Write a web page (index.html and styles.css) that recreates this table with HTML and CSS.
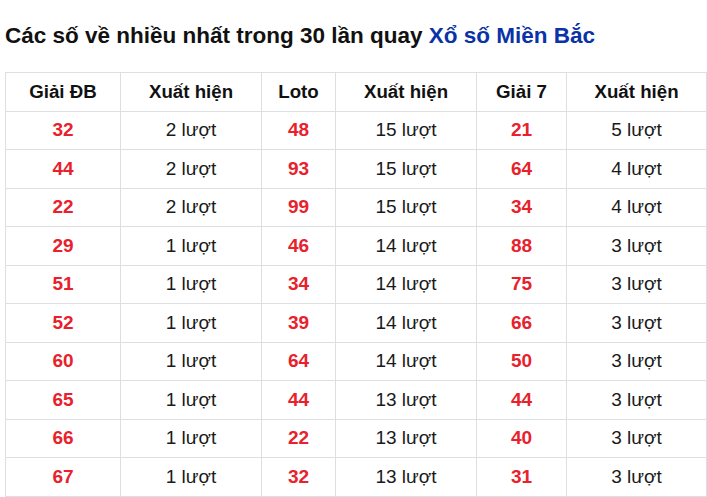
FILE: index.html
```html
<!DOCTYPE html>
<html lang="vi">
<head>
<meta charset="utf-8">
<link rel="stylesheet" href="styles.css">
</head>
<body>
<div class="wrap">
  <h2 class="title">Các số về nhiều nhất trong 30 lần quay <span class="hl">Xổ số Miền Bắc</span></h2>
  <table class="stats">
    <colgroup>
      <col class="c1"><col class="c2"><col class="c3"><col class="c4"><col class="c5"><col class="c6">
    </colgroup>
    <thead>
      <tr><th>Giải ĐB</th><th>Xuất hiện</th><th>Loto</th><th>Xuất hiện</th><th>Giải 7</th><th>Xuất hiện</th></tr>
    </thead>
    <tbody>
      <tr><td class="num">32</td><td>2 lượt</td><td class="num">48</td><td>15 lượt</td><td class="num">21</td><td>5 lượt</td></tr>
      <tr><td class="num">44</td><td>2 lượt</td><td class="num">93</td><td>15 lượt</td><td class="num">64</td><td>4 lượt</td></tr>
      <tr><td class="num">22</td><td>2 lượt</td><td class="num">99</td><td>15 lượt</td><td class="num">34</td><td>4 lượt</td></tr>
      <tr><td class="num">29</td><td>1 lượt</td><td class="num">46</td><td>14 lượt</td><td class="num">88</td><td>3 lượt</td></tr>
      <tr><td class="num">51</td><td>1 lượt</td><td class="num">34</td><td>14 lượt</td><td class="num">75</td><td>3 lượt</td></tr>
      <tr><td class="num">52</td><td>1 lượt</td><td class="num">39</td><td>14 lượt</td><td class="num">66</td><td>3 lượt</td></tr>
      <tr><td class="num">60</td><td>1 lượt</td><td class="num">64</td><td>14 lượt</td><td class="num">50</td><td>3 lượt</td></tr>
      <tr><td class="num">65</td><td>1 lượt</td><td class="num">44</td><td>13 lượt</td><td class="num">44</td><td>3 lượt</td></tr>
      <tr><td class="num">66</td><td>1 lượt</td><td class="num">22</td><td>13 lượt</td><td class="num">40</td><td>3 lượt</td></tr>
      <tr><td class="num">67</td><td>1 lượt</td><td class="num">32</td><td>13 lượt</td><td class="num">31</td><td>3 lượt</td></tr>
    </tbody>
  </table>
</div>
</body>
</html>
```
FILE: styles.css
```css
html, body {
  margin: 0;
  padding: 0;
  background: #ffffff;
}
body {
  font-family: "Liberation Sans", Arial, sans-serif;
  color: #111111;
}
.wrap {
  padding: 0 1px 0 5px;
}
.title {
  margin: 0;
  padding-top: 22px;
  height: 72px;
  box-sizing: border-box;
  font-size: 22.5px;
  line-height: 28px;
  font-weight: bold;
  color: #111111;
}
.hl {
  color: #0a33a8;
}
.stats {
  width: 701px;
  border-collapse: collapse;
  table-layout: fixed;
  font-size: 19px;
}
.c1 { width: 115px; }
.c2 { width: 141px; }
.c3 { width: 74px; }
.c4 { width: 141px; }
.c5 { width: 90px; }
.c6 { width: 140px; }
.stats th,
.stats td {
  border: 1px solid #dedfe3;
  text-align: center;
  height: 38.5px;
  padding: 0 4px;
  box-sizing: border-box;
  line-height: 20px;
}
.stats th {
  font-weight: bold;
  font-size: 18.7px;
  color: #111111;
}
.stats td {
  color: #1a1a1a;
}
.stats td.num {
  font-weight: bold;
  color: #e8212c;
}
```
